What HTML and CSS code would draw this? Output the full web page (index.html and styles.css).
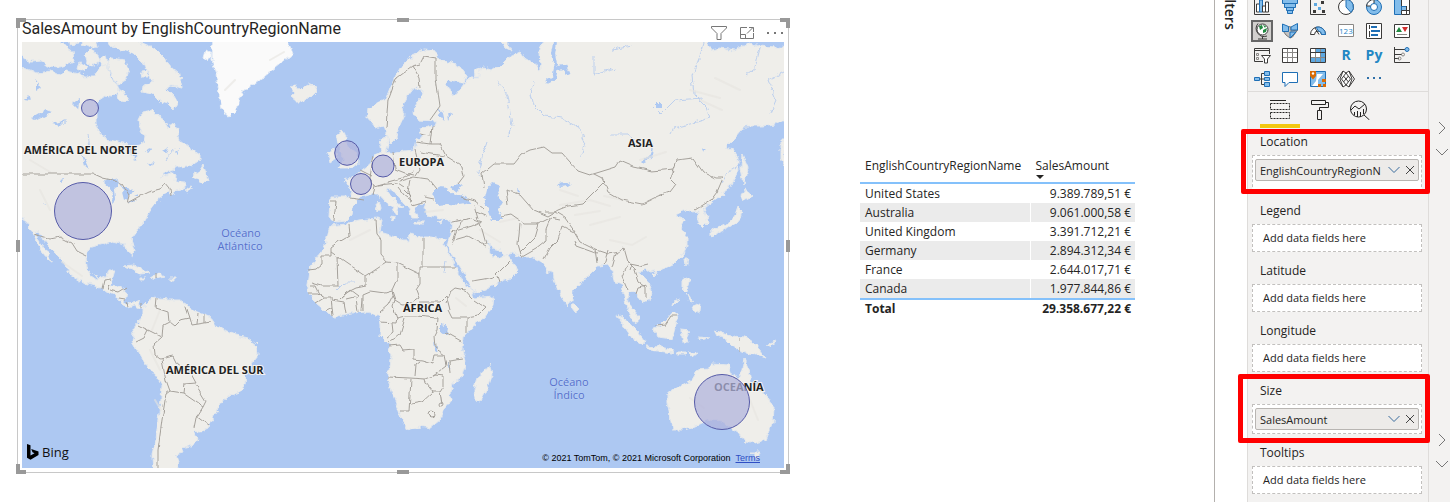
FILE: index.html
```html
<!DOCTYPE html>
<html lang="en">
<head>
<meta charset="utf-8">
<title>Sales report</title>
<link rel="stylesheet" href="styles.css">
</head>
<body>
<div class="app">
  <main class="canvas">
    <section class="visual">
      <header class="visual-head">
        <h2 class="visual-title">SalesAmount by EnglishCountryRegionName</h2>
        <div class="visual-tools">
          <button class="tool" aria-label="Filters"><svg width="18" height="16" viewBox="0 0 18 16"><path d="M1.500 1.500h15v1.500l-5.500 5.500v6h-4v-6L1.500 3z"/></svg></button>
          <button class="tool" aria-label="Focus mode"><svg width="16" height="16" viewBox="0 0 16 16"><path d="M8 2.500H1.500v11h13V8M1.500 9.500h5v4M8 8.500l6-6M10 2.500h4.500V7"/></svg></button>
          <button class="tool" aria-label="More options"><svg width="18" height="16" viewBox="0 0 18 16"><path class="solid" d="M1 7h2v2H1zM8 7h2v2H8zM15 7h2v2h-2z"/></svg></button>
        </div>
      </header>
      <div class="map">
        <svg class="map-svg" viewBox="22 42 762 426" role="img" aria-label="Map of sales amount by country">
          <defs>
            <filter id="coast" x="0" y="0" width="100%" height="100%">
              <feTurbulence type="fractalNoise" baseFrequency="0.16" numOctaves="3" seed="4" result="n"/>
              <feDisplacementMap in="SourceGraphic" in2="n" scale="6" xChannelSelector="R" yChannelSelector="G"/>
            </filter>
            <filter id="line" x="0" y="0" width="100%" height="100%">
              <feTurbulence type="fractalNoise" baseFrequency="0.1" numOctaves="2" seed="9" result="n"/>
              <feDisplacementMap in="SourceGraphic" in2="n" scale="4" xChannelSelector="R" yChannelSelector="G"/>
            </filter>
          </defs>
          <rect class="sea" x="22" y="42" width="762" height="426"/>
          <g filter="url(#coast)">
            <g class="land">
              <path d="M10 65L30 70 38 73 50 71 62 74 66 70 78 73 84 76 95 76 100 66 106 64 110 76 117 84 119 90 112 97 103 96 98 102 96 108 96 122 100 134 110 140 118 142 128 144 131 155 136 162 138 153 134 148 144 142 145 136 140 128 139 120 143 112 152 110 158 116 164 120 168 127 174 123 178 130 180 140 190 148 200 155 200 160 192 165 178 167 168 171 160 178 172 172 176 175 175 181 184 182 186 186 172 194 168 192 158 200 152 208 147 216 142 225 136 232 131 239 134 250 133 256 128 252 125 244 112 241 103 244 92 247 86 256 87 268 92 275 98 279 106 276 108 270 115 270 112 280 110 285 118 286 126 289 125 296 124 302 130 304 138 302 142 308 140 309 134 306 126 308 120 301 114 294 104 290 96 286 84 283 70 274 66 267 64 262 57 255 50 248 44 240 40 232 35 231 38 240 45 250 53 263 48 259 40 249 36 240 30 228 22 216 10 205z"/>
              <path d="M10 52L22 56 30 62 42 61 48 66 60 67 74 62 73 52 64 46 58 36 10 36zM66 36L70 45 78 44 76 36zM84 36L82 44 90 48 98 47 96 36zM90 49L96 52 100 61 93 66 86 62 84 55zM80 62L88 66 84 72 78 69zM106 64L112 58 124 60 129 70 126 80 118 84 111 74zM100 58L106 56 108 64 102 66z"/>
              <path d="M104 36L112 46 122 50 134 54 144 64 147 74 152 82 143 86 142 92 152 94 158 100 168 103 174 109 178 103 174 96 166 88 172 86 182 88 180 80 184 78 172 68 164 58 154 48 140 42 132 36zM118 90L124 92 129 100 124 102 116 98zM142 72L149 71 148 77 143 77zM191 176L199 172 203 165 208 180 203 183zM184 190L192 186 188 192z"/>
              <path d="M142 307L148 301 154 296 160 299 168 300 180 300 188 305 190 309 200 313 210 317 216 326 225 331 236 335 248 338 257 345 258 355 250 365 246 374 245 384 240 392 228 396 220 403 218 412 212 420 208 428 200 432 195 431 198 438 194 445 182 448 184 453 176 455 178 461 175 475 153 475 152 455 156 440 158 420 161 400 162 385 156 375 148 368 140 355 132 342 134 333 133 328 138 322 142 315zM123 266L134 265 142 269 150 273 140 274 130 268zM151 277L158 273 165 277 157 279zM170 278h5v2h-5zM140 278h5v2h-5z"/>
              <path d="M290 87L295 85 300 89 308 84 314 86 316 92 311 97 303 101 296 101 291 97 295 93z"/>
              <path d="M328 153L335 148 337 158 330 163zM336 135L342 130 346 136 344 140 350 148 358 155 358 164 348 168 338 168 344 160 340 152 338 144z"/>
              <path d="M367 117L368 109 378 102 386 98 390 88 396 75 402 65 412 56 424 50 436 51 438 58 448 62 460 67 466 75 463 83 450 80 446 84 450 92 456 95 464 84 470 77 480 77 478 70 484 68 490 70 500 66 508 58 520 52 525 58 532 62 541 70 540 50 546 36 704 36 712 50 720 48 735 50 750 43 758 46 795 48 795 113 775 124 760 126 745 126 735 138 725 148 733 150 738 158 738 168 735 178 728 190 720 196 710 203 704 208 708 222 702 228 698 222 699 211 692 212 686 210 680 212 677 217 685 219 681 228 687 236 687 246 683 254 672 265 660 270 650 272 645 268 640 274 648 282 652 290 651 298 644 303 638 295 630 290 627 298 632 308 638 315 638 324 632 320 627 308 625 300 622 284 615 283 612 272 608 265 598 266 590 274 578 285 573 290 572 300 567 306 560 295 555 283 553 272 548 272 545 265 540 262 530 257 521 257 512 253 505 255 500 250 492 248 486 240 490 250 493 257 500 258 506 254 512 262 518 270 510 278 500 282 485 290 474 293 470 285 462 270 452 255 447 245 450 235 452 222 440 218 428 215 424 208 426 203 418 204 414 210 418 218 412 218 408 208 400 198 392 189 386 188 390 195 398 203 403 207 398 209 396 215 392 207 384 201 378 194 372 194 364 196 360 198 352 206 351 215 345 221 336 222 329 218 330 197 344 197 350 198 352 190 344 181 354 176 362 170 370 164 374 155 382 152 380 140 388 135 388 145 386 152 395 153 404 151 414 150 416 140 423 136 420 128 434 125 436 122 418 121 413 112 416 102 424 95 421 88 414 88 408 96 402 108 405 115 398 130 396 138 390 144 387 135 384 125 376 128z"/>
              <path d="M498 36L506 48 512 51 504 36zM474 70L481 68 480 76 475 76zM379 200l2 8-3 4-2-8zM389 216l6 1-1 3zM415 222h8v2h-8zM437 221l6-1-2 3z"/>
              <path d="M330 226L345 224 360 220 378 218 382 220 380 232 390 235 402 241 408 241 409 234 420 237 432 237 446 240 443 243 455 265 462 280 472 291 474 298 494 296 493 305 485 318 472 327 463 337 462 350 466 365 463 376 452 384 450 392 452 400 443 410 440 420 430 428 420 426 407 430 402 420 398 408 393 395 388 377 392 355 388 343 380 335 380 325 379 317 368 312 350 313 334 317 325 311 315 302 308 292 308 284 310 270 316 258 324 248zM490 365L492 375 487 390 481 401 475 399 474 390 477 378 484 372z"/>
              <path d="M573 303L578 308 575 312 572 308zM616 314L628 322 638 332 644 340 643 345 632 338 624 326zM645 346L660 347 674 350 672 353 650 350zM676 352h10v2h-10zM688 353l10-1-6 5zM653 327L660 326 668 318 674 311 678 317 675 328 672 339 658 337zM681 330L691 331 686 334 690 342 683 342zM683 278L689 280 687 292 683 288zM686 293l6 8-2 1zM679 300l-6 6 1-4zM693 306L701 303 700 312 694 310zM685 258L688 258 686 266zM652 274L657 272 655 277zM698 337l12 1-10 2zM715 330L722 333 732 336 745 337 756 345 765 357 756 354 748 353 740 350 732 346 726 340 718 336zM766 346l10-5-5 6z"/>
              <path d="M745 190L753 196 743 201 741 196zM738 206L742 210 739 222 730 227 718 232 711 237 711 231 725 225 734 218zM742 154L748 168 747 174 744 184 741 168zM781 140l4 0 0 26-4-6z"/>
              <path d="M667 394L680 386 692 380 698 370 708 369 712 363 728 364 730 373 738 378 742 370 744 358 749 370 751 382 758 388 766 395 774 408 773 422 766 440 755 443 745 441 738 432 730 427 722 421 708 420 700 424 685 430 672 430 670 415 667 402zM751 452L760 452 757 459z"/>
            </g>
            <path class="ice" d="M213 36L212 60 216 75 220 98 222 110 230 117 237 110 240 98 244 90 255 84 265 76 275 68 285 60 293 54 286 36zM206 50l6 4-4 8-4-5z"/>
            <path class="water" d="M433 197L434 190 442 186 448 190 455 196 462 195 472 203 460 205 448 204 436 205zM450 187L463 184 456 192zM486 190L492 183 500 186 497 193 502 203 498 210 503 220 492 220 488 210 484 198zM438 108l5 4 2 10-5-6zM447 112l4 2-3 6zM516 188l5 3-4 2zM641 163l9-8 4-10-1 10-8 9zM656 104h6v4h-6zM702 149l4-1-2 5zM556 185l10-3 5 3-10 2zM441 324l7 2-1 9-6-2zM434 340l4 12-3-2zM448 360l3 10-3-4z"/>
            <path class="water" d="M103 181L114 178 120 182 118 186 114 188 115 200 112 203 113 190zM121 186L134 190 130 196 124 200 122 192zM126 203l10-4-3 3zM134 197l7-3-3 3zM80 150l9 19-5-4zM32 118l14-8 6 2-16 8zM24 100l5-6 2 7zM36 80l6 8-6 4zM52 124l14-4-6 6zM72 104l8-6-2 12zM145 150l8-3-5 6zM162 152l6-4-2 6zM148 165l6-4-2 5zM174 152l6-2-3 5zM58 180l6-1-3 3zM44 203l4 3-3-1z"/>
            <path class="gulf" d="M555 42l-2 12 3 14-2 10-8 4M557 68l8-1 3 8"/>
            <path class="river" d="M534 82l-3 12 3 12 10 10 18 2 18 10 5 14-4 14M704 42l-4 14-8 20 2 18 12 12 4 12-20 6-16 4-3 6M703 98l-28 2-14 14-8-8M594 56v18l22-6M612 50l20-4M760 48l-5 20-8 6M784 72l-16 8 8 20-6 14M609 134l20 0 6 8M497 80l10 15 5 30-4 12M487 142l-5 15-4 20M337 290l8-8 10 0M446 262l-2 10M738 166l-12 8-4 10M70 42l2 10M88 134l2 14M166 160l8-12"/>
          </g>
          <g class="relief">
            <path d="M560 205l30-5 20 6M575 215l25-4M590 225l30-8M604 196l20 4M690 90l30 8M700 100l22 10M715 78l25 12M610 240l22 5 14-8M560 190l18 6M40 190l10 20M30 160l20 12M62 262l20 14M155 400l6 10M150 350l10 20M480 230l20 12M500 222l18-4M350 240l20-10M425 212l18-2M750 400l8 20M690 398l14 10M456 298l10 8M270 60l14-8M225 90l10-10M160 310l-8 20M640 160l26-8"/>
          </g>
          <g class="borders" filter="url(#line)">
            <path d="M22 174H94L103 178 112 180 122 185 129 196 127 203 138 197 148 192 160 189 165 182 170 188 171 196M34 234L50 239 60 237 72 243 77 251 87 256M102 289l2-9 7-1M110 284l-2 6M110 290l8 2 8-5M119 298l6 1M126 301l2 5M141 304v4M157 273v5"/>
            <path d="M157 298L156 308 168 312 169 322 163 325 162 337 153 345 154 354 160 359 174 356 178 364 190 372 196 383 184 384 183 393 170 391 166 380 162 360M138 325L148 330 162 337M148 330L144 338 136 342M170 391L166 394 162 420 158 450 158 470M183 393L196 402 203 407 206 401 196 385M203 407L196 418 194 428M196 416L208 425M169 322L174 326 180 320 190 318 192 325 211 322M190 318L186 306M197 324L198 313M205 323V314"/>
            <path d="M386 128L388 100 396 78 412 66 420 64 424 56 436 58 436 78 440 106 430 120M412 66L419 78 420 88M330 201h6l-2 20M350 198l14 2M372 164l-2 14 4 8 14-4 14-4 12-6M360 170l12 6M374 156l-2 8M393 153l2 16 10 4 10 2M415 150l5 20-4 6M416 142l14 2 2-18M420 133l10 2M430 144l10 0 6 12 16 10 2 10-6 8M420 152l24 4M400 181l14-4 14 2 8 10M378 185l20-2 6 4M398 187l6 8 8 6M410 180l-2 12 4 12M424 197l10 2M412 205l14-4M404 190l6 6M374 186l-2 8"/>
            <path d="M461 197l14 4 10 8M474 205l4 14M476 212l10 4M452 222l20-4 10 4M460 222l-8 22M452 232l20-6 8-4 6 22M454 240l14-4 18 10M484 188l-2-14 12-10 20 0 8-10 8-4 14-3 8 6 10 0 16 18 12 4 26-8 4-6 14 6 18 4 22-2M508 204l-2-14 14 4 14 16 14 6 10-6 10-4 14-2 14-14 8-8M594 174l8 4 6 14 14 8 20 4 16-8 12-4 6-8-6-6 4-8M673 172l4-12 16-2 10 14 12 6 8 0-6 14-6 8-16 10M500 216l10-2 14 10 14 0 12-6 10 2M520 224l-2 20 4 14M538 224l-4 14-14 14M545 212l10 0 10 6 10 14M550 219l-4 10 0 12-10 8-14 8M544 260l6-12 8-8 4-14 12 6 6 10 16 8 12 4 12-2M574 240l2 6 22 8M596 250l2 14M608 250l-4 14M612 268l4-14 8-6 4 14 8 8M628 264l-6 12 6 14M630 264l10 2 8-2M634 270l4 12 8 6 0 10M636 294l2-6 10-2M630 270l2-6M472 281l12-2 10-2 8-8 8-8M500 282l-2-6"/>
            <path d="M349 225L350 235 338 242 331 247V256H322V265L317 269 308 270M331 252L366 276M340 258H337L338 286H322L312 283M366 276V286L356 288 346 293 340 299M366 276L387 262 381 255V240L377 235 376 220M387 262L397 263 420 274V267H423M423 238V267H455M397 263V280L392 291 395 300 403 305 412 303 419 298 416 290 420 284V274M363 311V294L370 291 385 293 392 291M393 295L388 305 380 312M395 300L393 306 397 318 396 323 380 322M397 318L405 316 416 316 438 318M419 302H440L446 296 448 302 450 310M446 302L450 292 455 288 465 290 472 298M474 300L486 308 478 316 467 318V333M448 310L452 318 467 318M438 318L437 330 434 336 435 348 445 355M445 332L461 341M449 361L463 359M405 318L400 335 394 340 388 342M392 323L393 332 386 338"/>
            <path d="M389 346L400 345 403 350 414 349V360L422 361 432 364 434 355 445 355 447 365 438 372 432 376M420 362L416 365 415 376M388 377L410 378 425 379M411 379L409 411 400 411M411 404L422 402 433 392 426 383 425 379 435 375 444 376V386L440 392H433M440 392L442 405M449 361L450 374M308 293L318 293 322 297 331 297 333 316M310 286L316 286 321 296M332 300L344 302 346 313M340 299L350 290 358 296 346 299M356 298L358 312M362 297L361 311M316 303L324 298M325 311L332 307"/>
            <circle cx="431" cy="414" r="3"/><circle cx="441" cy="405" r="2"/>
            <path d="M655 326l10-1 6-9 6 0M740 337v16"/>
          </g>
          <g class="bubbles">
            <text class="continent" x="24" y="154">AMÉRICA DEL NORTE</text>
            <text class="continent" x="166" y="374">AMÉRICA DEL SUR</text>
            <text class="continent" x="399" y="166">EUROPA</text>
            <text class="continent" x="628" y="147">ASIA</text>
            <text class="continent" x="403" y="312">ÁFRICA</text>
            <text class="continent" x="714" y="391">OCEANÍA</text>
            <text class="ocean" x="241" y="237">Océano</text>
            <text class="ocean" x="240" y="250">Atlántico</text>
            <text class="ocean" x="569" y="386">Océano</text>
            <text class="ocean" x="569" y="399">Índico</text>
            <circle cx="90" cy="108" r="8.500"/>
            <circle cx="83" cy="211" r="28.500"/>
            <circle cx="347" cy="153" r="12.300"/>
            <circle cx="383" cy="166" r="11"/>
            <circle cx="361" cy="184" r="10.500"/>
            <circle cx="722" cy="402" r="27.500"/>
          </g>
        </svg>
        <div class="bing"><svg width="12" height="16" viewBox="0 0 12 16"><path d="M0 0l3.500 1.200v10.300l4-2.300-2-.900-1.300-3.300L11.500 7.500v3.500L3.500 15.800 0 13.800z"/></svg><span>Bing</span></div>
        <div class="credits"><span>© 2021 TomTom, © 2021 Microsoft Corporation</span><a href="#terms">Terms</a></div>
      </div>
      <i class="grip nw"></i><i class="grip n"></i><i class="grip ne"></i><i class="grip w"></i><i class="grip e"></i><i class="grip sw"></i><i class="grip s"></i><i class="grip se"></i>
    </section>
    <table class="sales">
      <colgroup><col><col class="amount"></colgroup>
      <thead><tr><th>EnglishCountryRegionName</th><th class="sorted">SalesAmount</th></tr></thead>
      <tbody>
        <tr><td>United States</td><td>9.389.789,51 €</td></tr>
        <tr><td>Australia</td><td>9.061.000,58 €</td></tr>
        <tr><td>United Kingdom</td><td>3.391.712,21 €</td></tr>
        <tr><td>Germany</td><td>2.894.312,34 €</td></tr>
        <tr><td>France</td><td>2.644.017,71 €</td></tr>
        <tr><td>Canada</td><td>1.977.844,86 €</td></tr>
      </tbody>
      <tfoot><tr><td>Total</td><td>29.358.677,22 €</td></tr></tfoot>
    </table>
  </main>

  <aside class="filters"><div class="filters-title">Filters</div></aside>

  <aside class="pane">
    <div class="gallery">
      <button aria-label="Column chart"><svg viewBox="0 0 18 18"><path class="k" d="M1.500 0v16.500H17"/><path class="k w" d="M3.500 6h3v8h-3zM12.500 4h3v10h-3z"/><path class="b" d="M6.500 2h3v12h-3z"/><path class="k w" d="M9.500 8h3v6h-3z"/></svg></button>
      <button aria-label="Funnel"><svg viewBox="0 0 18 18"><path class="b" d="M1.500 1.500h15v4h-15zM3.500 5.500h11v4h-11zM5.500 9.500h7v3h-7zM6.500 12.500h5v3h-5z"/></svg></button>
      <button aria-label="Scatter chart"><svg viewBox="0 0 18 18"><path class="k" d="M1.500 0v16.500H17"/><path class="kf" d="M12 3h3v3h-3zM4 12h3v3H4zM13 12h3v3h-3z"/><path class="bf" d="M5 5h3v3H5zM9 9h3v3H9z"/></svg></button>
      <button aria-label="Pie chart"><svg viewBox="0 0 18 18"><circle class="k w" cx="9" cy="9" r="7.500"/><path class="b" d="M9 9V1.500a7.500 7.500 0 0 1 5 13z"/></svg></button>
      <button aria-label="Donut chart"><svg viewBox="0 0 18 18"><circle class="b" cx="9" cy="9" r="7.500"/><path class="k w" d="M9 1.500A7.500 7.500 0 0 0 1.500 8h4L9 5.500z"/><circle class="bo w" cx="9" cy="9" r="3.500"/></svg></button>
      <button aria-label="Treemap"><svg viewBox="0 0 18 18"><path class="b" d="M1.500 1.500h7v15h-7z"/><path class="k w" d="M8.500 1.500h8v15h-8z"/><path class="b" d="M8.500 8.500h5v4h-5z"/><path class="k" d="M8.500 12.500h8M13.500 8v8"/></svg></button>

      <button class="on" aria-label="Map"><svg viewBox="0 0 18 18"><circle class="k w" cx="9.500" cy="7.500" r="5.500"/><path class="g" d="M6 4l3-1 1 3-3 2zM10 8l4-2-1 4-3 1zM10 3l3 1-1 2z"/><path class="k" d="M5 1.500a8 8 0 0 0 9 12.500M9.500 15v2M5 17h9"/></svg></button>
      <button aria-label="Filled map"><svg viewBox="0 0 18 18"><path class="gr" d="M7.500 4.500L10 5v4l6.500-1-5 7L9 16l-4-3-2.500-3.500h5z"/><path class="b" d="M1.500 2l6 2.500v5h-6zM10 5l6.500-3.500V8H10zM9 10h6l-6 6z"/></svg></button>
      <button aria-label="Gauge"><svg viewBox="0 0 18 18"><path class="k w" d="M1.500 12.500a7.500 7.500 0 0 1 15 0h-4a3.500 3.500 0 0 0-7 0z"/><path class="b" d="M7 5.200a7.500 7.500 0 0 1 9.500 7.300h-4a3.500 3.500 0 0 0-3-3.500z"/><path class="k" d="M10 12.500L6 6"/></svg></button>
      <button aria-label="Card"><svg viewBox="0 0 18 18"><path class="gl w" d="M1.500 2.500h15v12h-15z"/><text class="n" x="2" y="12">123</text></svg></button>
      <button aria-label="Multi-row card"><svg viewBox="0 0 18 18"><path class="k w" d="M1.500 1.500h15v15h-15z"/><path class="k" d="M4.500 3v4M4.500 9v6"/><path class="bl" d="M6 5h6M6 9h9M6 13h7"/></svg></button>
      <button aria-label="KPI"><svg viewBox="0 0 18 18"><path class="k w" d="M1.500 2.500h15v13h-15z"/><path class="g" d="M3 10l3-5 3 5z"/><path class="r" d="M9 5h6l-3 5z"/><path class="gl" d="M4 12.500h10"/></svg></button>

      <button aria-label="Slicer"><svg viewBox="0 0 18 18"><path class="k" d="M10 15.500H1.500v-13h15V8M1.500 4.500h15"/><path class="gl" d="M3.500 7.500h2v2h-2zM3.500 11.500h2v2h-2z"/><path class="k w" d="M8.500 9.500h9l-3 3.500v4h-3v-4z"/></svg></button>
      <button aria-label="Table"><svg viewBox="0 0 18 18"><path class="k w" d="M1.500 2.500h15v14h-15z"/><path class="gl" d="M2 6.500h14M2 11.500h14M6.500 3v13M11.500 3v13"/></svg></button>
      <button aria-label="Matrix"><svg viewBox="0 0 18 18"><path class="w" d="M1.500 2.500h15v14h-15z"/><path class="bf" d="M7 3h9v3H7zM12 3h4v14h-4zM2 12h14v4H2z"/><path class="gl" d="M2 11.500h14M6.500 3v13M11.500 3v13"/><path class="k" d="M1.500 2.500h15v14h-15zM2 6.500h14"/></svg></button>
      <button class="let" aria-label="R script visual">R</button>
      <button class="let" aria-label="Python visual">Py</button>
      <button aria-label="Key influencers"><svg viewBox="0 0 18 18"><path class="k" d="M1.500 1v15.500H17M2 3.500h10M2 8.500h7M2 12.500h4"/><circle class="b" cx="14" cy="3.500" r="2"/><circle class="gl" cx="10" cy="8.500" r="1.500"/><circle class="gl" cx="6.500" cy="12.500" r="1.500"/></svg></button>

      <button aria-label="Decomposition tree"><svg viewBox="0 0 18 18"><path class="k" d="M6 9h5M8.500 3.500v11M8.500 3.500H11M8.500 14.500H11"/><path class="b" d="M1.500 7.500h5v3h-5zM11.500 1.500h5v4h-5zM11.500 7.500h5v3h-5zM11.500 12.500h5v4h-5z"/></svg></button>
      <button aria-label="Q&amp;A"><svg viewBox="0 0 18 18"><path class="bo w" d="M1.500 2.500h15v10H8l-4 4v-4H1.500z"/></svg></button>
      <button aria-label="ArcGIS map"><svg viewBox="0 0 18 18"><path class="b" d="M1.500 1.500h15v15h-15z"/><path class="w" d="M8 4h6l-5 6v6H3l4-5z"/><path class="o" d="M1 1h6v5L4 9.500 1 6zM13 9h4v3h-4zM14 14h3v3h-3zM9 14h3v3H9z"/><circle class="w" cx="4" cy="3.500" r="1.200"/></svg></button>
      <button aria-label="Power Apps"><svg viewBox="0 0 18 18"><path class="k w" d="M6 1L9 3l3-2 5.500 8L12 17l-3-2-3 2L.5 9z"/><path class="k" d="M9 3l4.500 6L9 15 4.500 9zM6 1L3 9l3 8M12 1l3 8-3 8M6.500 6l5 6M11.500 6l-5 6"/></svg></button>
      <button aria-label="Get more visuals"><svg viewBox="0 0 18 18"><path class="dots" d="M2 7h2v2H2zM8 7h2v2H8zM14 7h2v2h-2z"/></svg></button>
    </div>
    <div class="tabs">
      <button class="tab active" aria-label="Fields"><svg width="22" height="20" viewBox="0 0 22 20"><path d="M1 .5h16"/><path stroke-dasharray="2 1" d="M1.500 3.500h19v6h-19zM1.500 12.500h19v6h-19z"/></svg></button>
      <button class="tab" aria-label="Format"><svg width="20" height="20" viewBox="0 0 20 20"><path d="M1.500 .5h14v4h-14zM15.500 2.500h3v5h-9v3M7.500 10.500h4v9h-4z"/></svg></button>
      <button class="tab" aria-label="Analytics"><svg width="22" height="20" viewBox="0 0 22 20"><circle cx="9.500" cy="9" r="8"/><path d="M15 15l5.500 5M2 10l4-4 4 3 6-5M5.500 12v3M8.500 11v6M11.500 12v5M14.500 9v5"/></svg></button>
    </div>
    <div class="wells">
      <section class="well">
        <h3>Location</h3>
        <div class="drop tall"><div class="field"><span>EnglishCountryRegionN</span><button class="caret" aria-label="Field options"><svg width="12" height="8" viewBox="0 0 12 8"><path d="M.5 1L6 6.500 11.500 1"/></svg></button><button aria-label="Remove field"><svg width="10" height="10" viewBox="0 0 10 10"><path d="M1 1l8 8M9 1L1 9"/></svg></button></div></div>
        <i class="mark mark-location"></i>
      </section>
      <section class="well"><h3>Legend</h3><div class="drop empty">Add data fields here</div></section>
      <section class="well"><h3>Latitude</h3><div class="drop empty">Add data fields here</div></section>
      <section class="well"><h3>Longitude</h3><div class="drop empty">Add data fields here</div></section>
      <section class="well">
        <h3>Size</h3>
        <div class="drop"><div class="field"><span>SalesAmount</span><button class="caret" aria-label="Field options"><svg width="12" height="8" viewBox="0 0 12 8"><path d="M.5 1L6 6.500 11.500 1"/></svg></button><button aria-label="Remove field"><svg width="10" height="10" viewBox="0 0 10 10"><path d="M1 1l8 8M9 1L1 9"/></svg></button></div></div>
        <i class="mark mark-size"></i>
      </section>
      <section class="well"><h3>Tooltips</h3><div class="drop empty">Add data fields here</div></section>
    </div>
  </aside>

  <aside class="rail">
    <div class="rail-group">
      <button aria-label="Expand"><svg width="14" height="14" viewBox="0 0 14 14"><path d="M4 1l6 6-6 6"/></svg></button>
      <button aria-label="Collapse"><svg width="14" height="14" viewBox="0 0 14 14"><path d="M1 4l6 6 6-6"/></svg></button>
    </div>
    <div class="rail-group">
      <button aria-label="Expand"><svg width="14" height="14" viewBox="0 0 14 14"><path d="M4 1l6 6-6 6"/></svg></button>
      <button aria-label="Collapse"><svg width="14" height="14" viewBox="0 0 14 14"><path d="M1 4l6 6 6-6"/></svg></button>
    </div>
  </aside>
</div>
</body>
</html>
```
FILE: styles.css
```css
* { box-sizing: border-box; }
body {
  margin: 0;
  background: #fff;
  color: #252423;
  font-family: "Open Sans", "Noto Sans", sans-serif;
  font-size: 12px;
}
button {
  display: flex;
  align-items: center;
  justify-content: center;
  padding: 0;
  border: 0;
  background: none;
  font: inherit;
}
h2, h3 { margin: 0; font-weight: 400; }

.app {
  display: grid;
  grid-template-columns: minmax(0, 1fr) 33px 182px 21px;
  height: 100vh;
  overflow: hidden;
}

/* Report canvas */
.canvas {
  display: grid;
  grid-template-columns: minmax(0, 1fr) 275px;
  column-gap: 71px;
  align-items: start;
  padding: 19px 79px 0 17px;
}
.visual {
  position: relative;
  padding: 0 4px 4px;
  border: 1px solid #c8c8c8;
}
.visual-head {
  display: flex;
  justify-content: space-between;
  height: 22px;
}
.visual-title {
  font-family: Roboto, sans-serif;
  font-size: 16px;
  line-height: 18px;
  white-space: nowrap;
}
.visual-tools { display: flex; gap: 11px; padding-top: 4px; }
.tool { height: 18px; }
.tool path { fill: none; stroke: #777; }
.tool .solid { fill: #777; stroke: none; }

.map { position: relative; }
.map-svg { display: block; width: 100%; height: auto; }
.sea, .water { fill: #adc8f2; }
.land { fill: #efeeea; stroke: #e4e8ec; stroke-width: 1; }
.ice { fill: #fafafa; stroke: #e6edf5; }
.gulf { fill: none; stroke: #adc8f2; stroke-width: 4; }
.river { fill: none; stroke: #bdd0ee; stroke-width: 1; }
.relief { fill: none; stroke: #e6e4df; stroke-width: 2; stroke-linecap: round; opacity: .6; }
.borders { fill: none; stroke: #a5a19b; stroke-width: 1; stroke-linejoin: round; }
.continent {
  fill: #222;
  stroke: #f4f3f0;
  stroke-width: 2px;
  paint-order: stroke;
  font-size: 11px;
  font-weight: 700;
}
.ocean { fill: #5570cc; font-size: 11px; text-anchor: middle; }
.ocean { stroke: #b9d0f5; stroke-width: 1px; paint-order: stroke; }
.bubbles circle { fill: #b1b3dc; fill-opacity: .74; stroke: #565ba8; stroke-width: 1; }

.bing {
  position: absolute;
  left: 5px;
  bottom: 6px;
  display: flex;
  align-items: center;
  gap: 3px;
  color: #111;
  font-size: 13px;
  line-height: 20px;
}
.credits {
  position: absolute;
  right: 24px;
  bottom: 4px;
  display: flex;
  gap: 5px;
  color: #000;
  font-family: "Liberation Sans", Arial, sans-serif;
  font-size: 9px;
  line-height: 12px;
}
.credits a { color: #2f4ec4; }

.grip { position: absolute; border: 0 solid #999; }
.nw, .ne, .sw, .se { width: 10px; height: 10px; }
.nw, .n, .ne { top: -2px; }
.sw, .s, .se { bottom: -2px; }
.nw, .w, .sw { left: -2px; }
.ne, .e, .se { right: -2px; }
.nw, .ne { border-top-width: 4px; }
.sw, .se { border-bottom-width: 4px; }
.nw, .sw { border-left-width: 4px; }
.ne, .se { border-right-width: 4px; }
.n, .s { left: calc(50% - 6px); width: 12px; height: 4px; background: #999; }
.w, .e { top: calc(50% - 6px); width: 4px; height: 12px; background: #999; }

/* Table visual */
.sales {
  width: 100%;
  margin-top: 136px;
  border-collapse: collapse;
  table-layout: fixed;
  line-height: 17px;
}
.sales .amount { width: 105px; }
.sales th, .sales td { padding: 1px 4px 1px 5px; text-align: left; white-space: nowrap; }
.sales th { height: 28px; padding-top: 2px; font-weight: 400; vertical-align: top; border-bottom: 2px solid #84c1fb; }
.sales th + th, .sales td + td { border-left: 1px solid #fff; }
.sales td + td { text-align: right; }
.sales tbody tr:nth-child(even) { background: #ebebeb; }
.sales tfoot td { padding-top: 0; border-top: 2px solid #84c1fb; font-weight: 700; }
.sorted { position: relative; }
.sorted::after {
  content: "";
  position: absolute;
  left: 5px;
  bottom: 3px;
  border: 4px solid transparent;
  border-top-color: #252423;
  border-bottom: 0;
}

/* Collapsed filters pane */
.filters { border-left: 1px solid #b3b0ad; }
.filters-title {
  display: flex;
  justify-content: flex-end;
  align-items: center;
  height: 30px;
  width: 30px;
  overflow: hidden;
  writing-mode: vertical-rl;
  font-size: 14px;
  font-weight: 600;
}

/* Visualizations pane */
.pane {
  position: relative;
  min-width: 0;
  background: #f3f2f1;
  border: solid #dedcda;
  border-width: 0 1px;
  z-index: 1;
}
.gallery {
  display: grid;
  grid-template-columns: repeat(6, 28px);
  grid-auto-rows: 24px;
  align-content: end;
  height: 92px;
  overflow: hidden;
  border-bottom: 1px solid #dedcda;
}
.gallery button { width: 22px; height: 22px; margin: 1px 3px; }
.gallery svg { width: 18px; height: 18px; flex: none; }
.gallery .on { border: 2px solid #666; background: #d2d0ce; }
.gallery path, .gallery circle { fill: none; stroke-width: 1; }
.gallery .k { stroke: #3b3a39; }
.gallery .gl { stroke: #8a8886; }
.gallery .w { fill: #fff; }
.gallery .b { fill: #83bdeb; stroke: #1f6fb5; }
.gallery .bo { stroke: #1f6fb5; }
.gallery .bl { stroke: #1f6fb5; stroke-width: 2; }
.gallery .bf { fill: #5ea8e0; }
.gallery .kf { fill: #3b3a39; }
.gallery .g { fill: #20893f; }
.gallery .r { fill: #d32f2f; }
.gallery .gr { fill: #c4c2c0; stroke: #777; }
.gallery .o { fill: #d96c06; }
.gallery .dots { fill: #2f70a8; }
.gallery .n { fill: #1f86c8; font-size: 8px; }
.gallery .let { color: #2387c4; font-size: 14px; font-weight: 700; line-height: 20px; }

.tabs { display: flex; padding-left: 12px; }
.tab { width: 40px; height: 36px; padding-top: 4px; border-bottom: 4px solid transparent; }
.tab svg { fill: none; stroke: #252423; }
.tab.active { border-bottom-color: #f2c811; }

.wells {
  display: grid;
  grid-template-columns: minmax(0, 1fr);
  row-gap: 10px;
  padding: 5px 6px 0 4px;
}
.well {
  position: relative;
  display: grid;
  grid-template-columns: minmax(0, 1fr);
  row-gap: 4px;
}
.well h3 { padding-left: 8px; font-size: 12px; line-height: 18px; }
.drop {
  padding: 3px 2px;
  border: 1px dashed #c2c0be;
  background: #fff;
  font-size: 11px;
}
.tall { padding-bottom: 10px; }
.empty { padding: 5px 10px; line-height: 16px; }
.field {
  display: flex;
  align-items: center;
  gap: 5px;
  height: 22px;
  padding: 0 3px 0 4px;
  border: 1px solid #b8b5b2;
  border-radius: 2px;
  background: #edebe9;
}
.field span { flex: 1; min-width: 0; overflow: hidden; white-space: nowrap; }
.field svg { fill: none; stroke: #444; }
.field .caret svg { stroke: #386b9c; }
.mark { position: absolute; border: 5px solid #f00; border-radius: 2px; }
.mark-location { top: -4px; right: -8px; bottom: -2px; left: -11px; }
.mark-size { top: -8px; right: -8px; bottom: -9px; left: -14px; }

.rail {
  display: flex;
  flex-direction: column;
  justify-content: space-between;
  padding: 121px 0 31px 5px;
  background: #f3f2f1;
}
.rail-group { display: grid; row-gap: 10px; }
.rail svg { fill: none; stroke: #777; }
```
